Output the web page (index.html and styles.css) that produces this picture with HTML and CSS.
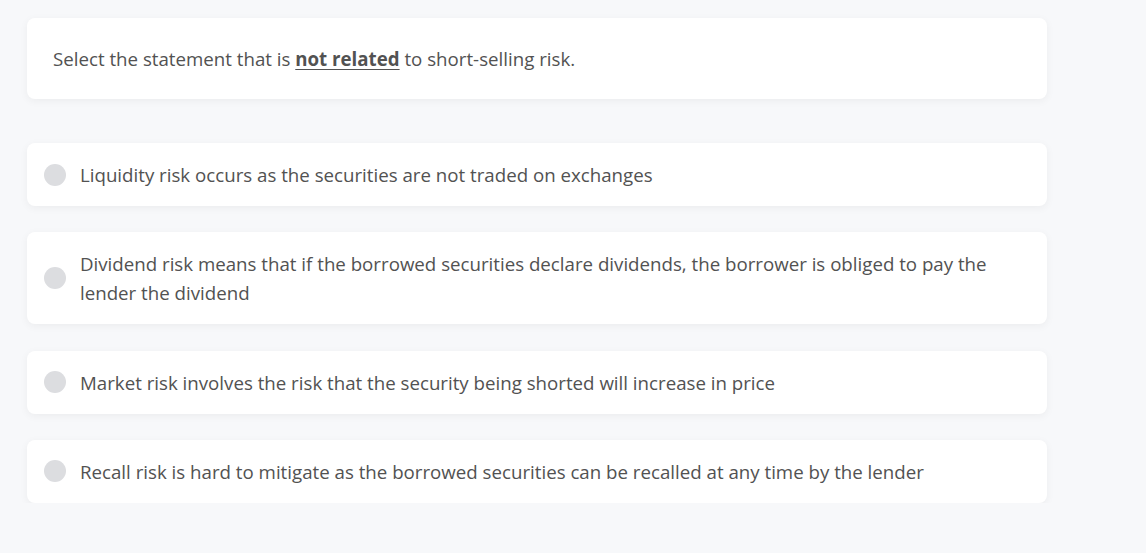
FILE: index.html
```html
<!DOCTYPE html>
<html>
<head>
<meta charset="utf-8">
<link rel="stylesheet" href="styles.css">
</head>
<body>
<div class="page">
  <div class="question">Select the statement that is <b class="emph">not related</b> to short-selling risk.</div>
  <div class="options">
    <div class="option"><span class="radio"></span><span class="label">Liquidity risk occurs as the securities are not traded on exchanges</span></div>
    <div class="option"><span class="radio"></span><span class="label">Dividend risk means that if the borrowed securities declare dividends, the borrower is obliged to pay the lender the dividend</span></div>
    <div class="option"><span class="radio"></span><span class="label">Market risk involves the risk that the security being shorted will increase in price</span></div>
    <div class="option"><span class="radio"></span><span class="label">Recall risk is hard to mitigate as the borrowed securities can be recalled at any time by the lender</span></div>
  </div>
</div>
</body>
</html>
```
FILE: styles.css
```css
html, body {
  margin: 0;
  padding: 0;
  background: #f7f8fa;
}
body {
  font-family: "Open Sans", "Noto Sans", sans-serif;
  font-size: 18.7px;
  color: #525252;
}
.page {
  width: 1020px;
  padding: 18px 0 0 27px;
}
.question {
  background: #fff;
  border-radius: 8px;
  box-shadow: 0 2px 8px rgba(0,0,0,0.05);
  padding: 26px 26px;
  line-height: 29px;
  height: 29px;
}
.emph {
  font-weight: 700;
  text-decoration: underline;
  text-underline-offset: 3px;
}
.options {
  display: flex;
  flex-direction: column;
  gap: 26.3px;
  margin-top: 44px;
}
.option {
  display: flex;
  align-items: center;
  gap: 14px;
  background: #fff;
  border-radius: 8px;
  box-shadow: 0 2px 8px rgba(0,0,0,0.05);
  padding: 17px 40px 17px 17px;
  line-height: 29px;
}
.radio {
  flex: 0 0 22px;
  width: 22px;
  height: 22px;
  border-radius: 50%;
  background: #dcdde0;
}
.label {
  flex: 1;
}
```
